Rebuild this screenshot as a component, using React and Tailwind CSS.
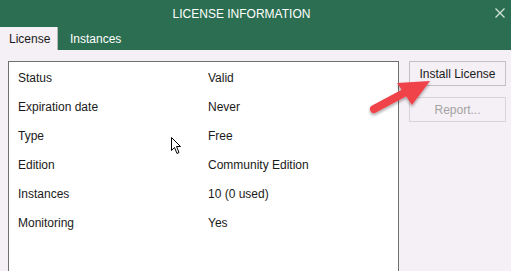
const rows = [
  ['Status', 'Valid'],
  ['Expiration date', 'Never'],
  ['Type', 'Free'],
  ['Edition', 'Community Edition'],
  ['Instances', '10 (0 used)'],
  ['Monitoring', 'Yes'],
]

export default function App() {
  return (
    <div className="relative w-[511px] h-[271px] overflow-hidden bg-[#f5f0f5] text-[12px] text-[#1a1a1a] font-['Liberation_Sans',Arial,sans-serif]">
      {/* header */}
      <div className="bg-[#2b6e51]">
        <div className="relative h-[27px] flex items-center justify-center pr-[28px]">
          <span className="text-white text-[12px]">LICENSE INFORMATION</span>
          <svg className="absolute right-[6px] top-[8px] w-[10px] h-[10px]" viewBox="0 0 10 10">
            <path d="M0.5 0.5 L9.5 9.5 M9.5 0.5 L0.5 9.5" stroke="#d3e2da" strokeWidth="1.3" />
          </svg>
        </div>
        <div className="h-[23px] flex items-stretch">
          <div className="w-[58px] bg-[#f5f0f5] border-r border-[#b8b8b8] flex items-center pl-[9px] text-[#1a1a1a]">
            License
          </div>
          <div className="flex items-center pl-[12px] text-white">Instances</div>
        </div>
      </div>

      {/* body */}
      <div className="flex pl-[8px] pt-[11px]">
        <div className="w-[391px] h-[230px] bg-white border border-[#6f6f6f] border-b-0 pt-[1px]">
          {rows.map(([k, v]) => (
            <div key={k} className="h-[29px] flex items-center">
              <span className="w-[199px] pl-[9px]">{k}</span>
              <span>{v}</span>
            </div>
          ))}
        </div>
        <div className="ml-[10px] flex flex-col gap-[11px]">
          <button className="w-[97px] h-[25px] border border-[#c3bfc3] bg-[#f5f0f5] text-[#1a1a1a] text-[12px]">
            Install License
          </button>
          <button className="w-[97px] h-[25px] border border-[#d8d4d8] bg-[#f5f0f5] text-[#a3a3a3] text-[12px]">
            Report...
          </button>
        </div>
      </div>

      {/* red arrow callout */}
      <svg className="absolute left-[360px] top-[70px] w-[80px] h-[50px]" viewBox="0 0 80 50">
        <defs>
          <filter id="sh" x="-20%" y="-20%" width="140%" height="160%">
            <feDropShadow dx="0" dy="2" stdDeviation="1.5" floodColor="#000" floodOpacity="0.35" />
          </filter>
        </defs>
        <g filter="url(#sh)">
          <path d="M14 39 L44 23" stroke="#f0434a" strokeWidth="8" strokeLinecap="round" />
          <path d="M37 13 L70 11 L52 35 Z" fill="#f0434a" />
        </g>
      </svg>

      {/* mouse cursor */}
      <svg className="absolute left-[171px] top-[137px] w-[12px] h-[18px]" viewBox="0 0 12 18">
        <path d="M0.5 0.5 L0.5 13.5 L3.5 10.5 L6 16.5 L8 15.5 L5.5 9.5 L9.5 9.5 Z" fill="#fff" stroke="#000" strokeWidth="1" strokeLinejoin="miter" />
      </svg>
    </div>
  )
}
